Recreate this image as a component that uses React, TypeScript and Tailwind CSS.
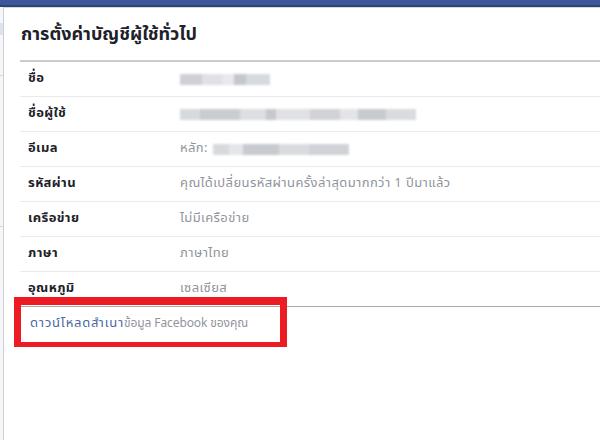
import React from 'react'

// blurred placeholder blocks for hidden personal info
const Blur = ({ blocks }: { blocks: string[] }) => (
  <div className="flex h-[11px] blur-[1.2px] opacity-90">
    {blocks.map((c, i) => (
      <span key={i} className={c} />
    ))}
  </div>
)

const rows: { label: string; value: React.ReactNode }[] = [
  {
    label: 'ชื่อ',
    value: (
      <Blur
        blocks={[
          'w-[22px] bg-[#c9ccd1]',
          'w-[20px] bg-[#dcdee2]',
          'w-[12px] bg-[#e6e7ea]',
          'w-[12px] bg-[#bfc2c7]',
          'w-[24px] bg-[#d3d6da]',
        ]}
      />
    ),
  },
  {
    label: 'ชื่อผู้ใช้',
    value: (
      <Blur
        blocks={[
          'w-[20px] bg-[#d3d6da]',
          'w-[40px] bg-[#c4c7cc]',
          'w-[26px] bg-[#d9dbdf]',
          'w-[10px] bg-[#c0c3c8]',
          'w-[34px] bg-[#dcdee2]',
          'w-[30px] bg-[#ccced3]',
          'w-[18px] bg-[#e0e2e5]',
          'w-[28px] bg-[#c2c5ca]',
          'w-[30px] bg-[#d6d8dc]',
        ]}
      />
    ),
  },
  {
    label: 'อีเมล',
    value: (
      <div className="flex items-center gap-[5px]">
        <span>หลัก:</span>
        <Blur
          blocks={[
            'w-[16px] bg-[#d3d6da]',
            'w-[14px] bg-[#e2e4e7]',
            'w-[36px] bg-[#c2c5ca]',
            'w-[30px] bg-[#d6d8dc]',
            'w-[40px] bg-[#ccced3]',
          ]}
        />
      </div>
    ),
  },
  { label: 'รหัสผ่าน', value: 'คุณได้เปลี่ยนรหัสผ่านครั้งล่าสุดมากกว่า 1 ปีมาแล้ว' },
  { label: 'เครือข่าย', value: 'ไม่มีเครือข่าย' },
  { label: 'ภาษา', value: 'ภาษาไทย' },
  { label: 'อุณหภูมิ', value: 'เซลเซียส' },
]

export default function App() {
  return (
    <div className="relative flex h-[440px] w-[600px] flex-col overflow-hidden bg-white font-['Tahoma','Noto_Sans_Thai','Loma','Liberation_Sans',sans-serif]">
      {/* blue top bar */}
      <div className="h-[7px] shrink-0 border-b-2 border-[#2d4373] bg-[#3b5998]" />

      <div className="flex flex-1">
        {/* sidebar edge */}
        <div className="flex w-[4px] shrink-0 flex-col border-r border-[#ccd0d5] bg-[#f6f7f9]">
          <div className="mt-[16px] h-[12px] bg-[#dde3ee]" />
          <div className="mt-[40px] h-px bg-[#d3d6db]" />
          <div className="mt-[150px] h-px bg-[#d3d6db]" />
        </div>

        <div className="flex-1 border-t border-[#d3d6db]">
          <div className="flex h-[52px] items-center pl-[17px]">
            <h1 className="text-[18px] font-bold text-[#1d2129]">การตั้งค่าบัญชีผู้ใช้ทั่วไป</h1>
          </div>

          <div className="ml-4 border-t-2 border-[#cccccc]">
            {rows.map((r, i) => (
              <div
                key={r.label}
                className={`flex h-[35px] items-center pl-2 text-[13px] tracking-[0.4px] ${
                  i === rows.length - 1
                    ? 'border-b border-[#aaaaaa]'
                    : 'border-b border-[#e9eaed]'
                }`}
              >
                <div className="w-[152px] shrink-0 font-bold text-[#1d2129]">{r.label}</div>
                <div className="text-[#90949c]">{r.value}</div>
              </div>
            ))}
            <div className="flex h-[36px] items-baseline pl-[10px] pt-[7px]">
              <span className="text-[13px] tracking-[0.8px] text-[#4b67a1]">ดาวน์โหลดสำเนา</span>
              <span className="text-[12px] tracking-[-0.1px] text-[#90949c]">ข้อมูล Facebook ของคุณ</span>
            </div>
          </div>
        </div>
      </div>

      {/* red annotation box */}
      <div className="absolute left-[14px] top-[297px] h-[50px] w-[273px] border-x-[7px] border-b-[5px] border-t-[8px] border-[#ed1c24]" />
    </div>
  )
}
